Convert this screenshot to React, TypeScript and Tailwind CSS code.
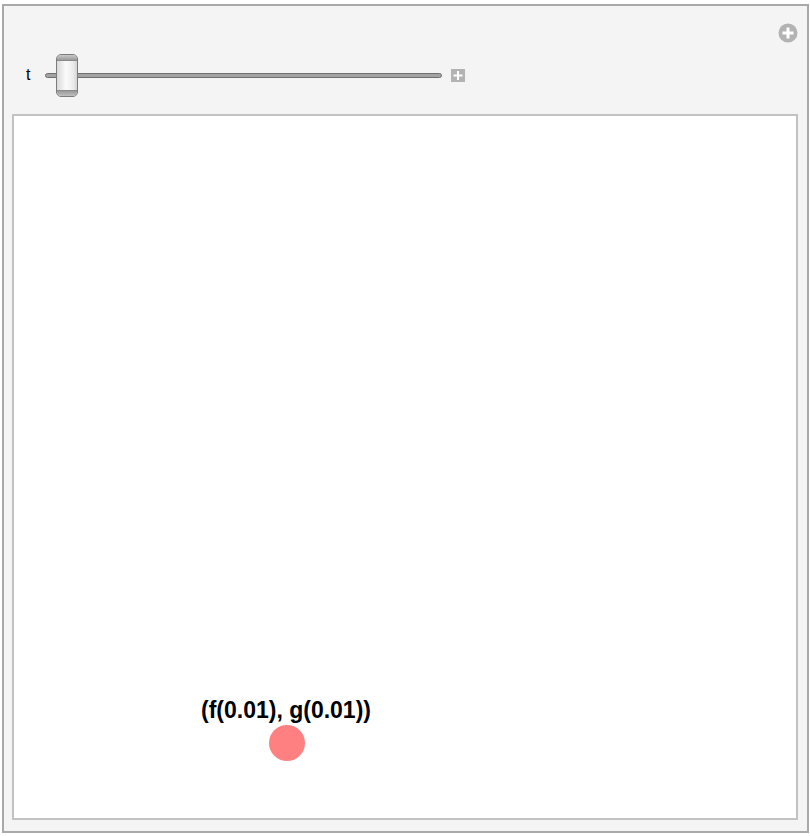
import React from "react";

export default function App() {
  return (
    <div className="w-[810px] h-[836px] bg-white relative overflow-hidden" style={{ fontFamily: '"Liberation Sans", Arial, sans-serif' }}>
      <div className="ml-[2px] mt-[4px] w-[807px] h-[829px] border-2 border-[#a9a9a9] bg-[#f4f4f4] flex flex-col">
        {/* top-right add icon row */}
        <div className="h-[40px] flex justify-end items-start pt-[17px] pr-[9px]">
          <svg width="20" height="20" viewBox="0 0 20 20">
            <circle cx="10" cy="10" r="9.5" fill="#b3b3b3" />
            <rect x="4.5" y="8.5" width="11" height="3" fill="#ffffff" />
            <rect x="8.5" y="4.5" width="3" height="11" fill="#ffffff" />
          </svg>
        </div>
        {/* slider row */}
        <div className="h-[60px] flex items-center pl-[22px] pb-[2px]">
          <span className="text-[16px] text-black leading-none w-[19px]">t</span>
          <div className="relative w-[397px] h-[5px] rounded-full bg-[#a3a3a3] border border-[#6f6f6f]">
            <div className="absolute left-[10px] top-[-20px] w-[22px] h-[43px] rounded-[5px] border border-[#7c7c7c] overflow-hidden flex flex-col bg-[linear-gradient(to_right,#d9d9d9,#fbfbfb_45%,#ececec_80%,#d4d4d4)]">
              <div className="h-[6px] bg-[linear-gradient(to_bottom,#c8c8c8,#9a9a9a)] border-b border-[#8a8a8a]"></div>
              <div className="flex-1"></div>
              <div className="h-[6px] bg-[linear-gradient(to_bottom,#9a9a9a,#c0c0c0)] border-t border-[#8a8a8a]"></div>
            </div>
          </div>
          <div className="ml-[9px] w-[14px] h-[13px] bg-[#b3b3b3] flex items-center justify-center">
            <svg width="14" height="13" viewBox="0 0 14 13">
              <rect x="2.5" y="5.5" width="9" height="2" fill="#ffffff" />
              <rect x="6" y="2" width="2" height="9" fill="#ffffff" />
            </svg>
          </div>
        </div>
        {/* plot panel */}
        <div className="mt-[8px] ml-[8px] w-[786px] h-[706px] border-2 border-[#c2c2c2] bg-white relative">
          <div className="absolute left-[137px] top-[583px] w-[270px] text-center text-[23px] leading-[23px] font-bold text-black whitespace-nowrap">
            (f(0.01), g(0.01))
          </div>
          <div className="absolute left-[255px] top-[609px] w-[36px] h-[36px] rounded-full bg-[#ff8080]"></div>
        </div>
      </div>
    </div>
  );
}
